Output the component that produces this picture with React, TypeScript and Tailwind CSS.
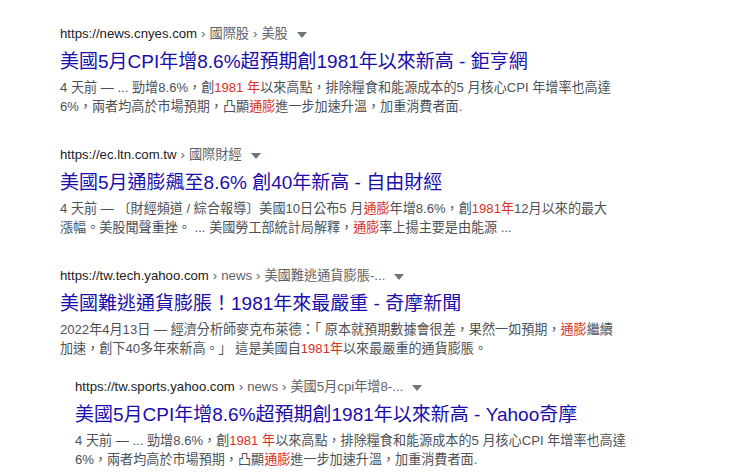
import React from 'react';

const font = { fontFamily: '"Liberation Sans", Arial, "Noto Sans CJK TC", sans-serif' };

type Part = string | { em: string };

type Result = {
  host: string;
  crumbs: string[];
  title: string;
  lines: Part[][];
  indent?: boolean;
};

const results: Result[] = [
  {
    host: 'https://news.cnyes.com',
    crumbs: ['國際股', '美股'],
    title: '美國5月CPI年增8.6%超預期創1981年以來新高 - 鉅亨網',
    lines: [
      ['4 天前 — ... 勁增8.6%，創', { em: '1981 年' }, '以來高點，排除糧食和能源成本的5 月核心CPI 年增率也高達'],
      ['6%，兩者均高於市場預期，凸顯', { em: '通膨' }, '進一步加速升溫，加重消費者面.'],
    ],
  },
  {
    host: 'https://ec.ltn.com.tw',
    crumbs: ['國際財經'],
    title: '美國5月通膨飆至8.6% 創40年新高 - 自由財經',
    lines: [
      ['4 天前 — 〔財經頻道 / 綜合報導〕美國10日公布5 月', { em: '通膨' }, '年增8.6%，創', { em: '1981年' }, '12月以來的最大'],
      ['漲幅。美股聞聲重挫。 ... 美國勞工部統計局解釋，', { em: '通膨' }, '率上揚主要是由能源 ...'],
    ],
  },
  {
    host: 'https://tw.tech.yahoo.com',
    crumbs: ['news', '美國難逃通貨膨脹-...'],
    title: '美國難逃通貨膨脹！1981年來最嚴重 - 奇摩新聞',
    lines: [
      ['2022年4月13日 — 經濟分析師麥克布萊德：「 原本就預期數據會很差，果然一如預期，', { em: '通膨' }, '繼續'],
      ['加速，創下40多年來新高。」 這是美國自', { em: '1981年' }, '以來最嚴重的通貨膨脹。'],
    ],
  },
  {
    host: 'https://tw.sports.yahoo.com',
    crumbs: ['news', '美國5月cpi年增8-...'],
    title: '美國5月CPI年增8.6%超預期創1981年以來新高 - Yahoo奇摩',
    indent: true,
    lines: [
      ['4 天前 — ... 勁增8.6%，創', { em: '1981 年' }, '以來高點，排除糧食和能源成本的5 月核心CPI 年增率也高達'],
      ['6%，兩者均高於市場預期，凸顯', { em: '通膨' }, '進一步加速升溫，加重消費者面.'],
    ],
  },
];

function Caret() {
  return (
    <svg width="10" height="6" viewBox="0 0 10 6" className="ml-[9px] mt-[1px]">
      <path d="M0 0 L10 0 L5 6 Z" fill="#70757a" />
    </svg>
  );
}

function ResultItem({ r, first }: { r: Result; first: boolean }) {
  const spacing = first ? '' : r.indent ? 'ml-[15px] mt-[19px]' : 'mt-[29px]';
  return (
    <div className={spacing}>
      <div className="flex items-center h-[20px] text-[13.2px] whitespace-nowrap">
        <span className="text-[#202124]">{r.host}</span>
        {r.crumbs.map((c) => (
          <span key={c} className="text-[#5f6368]">
            <span className="mx-[4px]">›</span>
            {c}
          </span>
        ))}
        <Caret />
      </div>
      <div className="mt-[5px] h-[26px] leading-[26px] text-[19px] text-[#1a0dab] whitespace-nowrap">
        {r.title}
      </div>
      <div className="mt-[3px] text-[13.1px] leading-[19px] text-[#4d5156]">
        {r.lines.map((line, i) => (
          <div key={i} className="whitespace-nowrap">
            {line.map((p, j) =>
              typeof p === 'string' ? (
                <span key={j}>{p}</span>
              ) : (
                <span key={j} className="text-[#d93025]">
                  {p.em}
                </span>
              )
            )}
          </div>
        ))}
      </div>
    </div>
  );
}

export default function App() {
  return (
    <div className="w-[740px] h-[476px] bg-white overflow-hidden pl-[60px] pt-[24px]" style={font}>
      {results.map((r, i) => (
        <ResultItem key={r.host} r={r} first={i === 0} />
      ))}
    </div>
  );
}
